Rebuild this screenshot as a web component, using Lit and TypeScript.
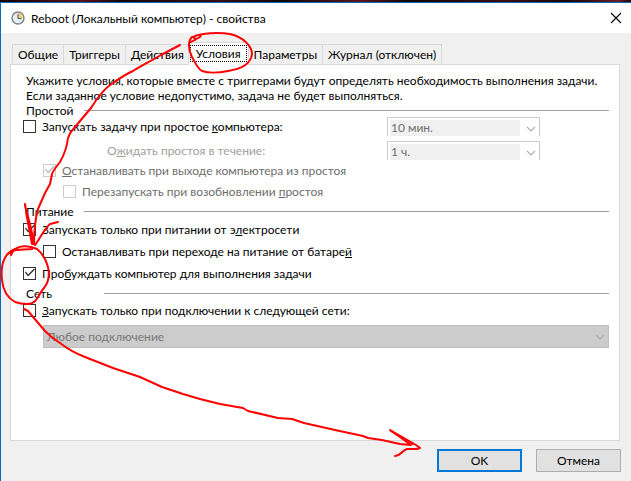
import { LitElement, html, css, svg } from "lit";
import { customElement } from "lit/decorators.js";

const chevron = html`<svg class="chevron" width="10" height="6" viewBox="0 0 10 6" aria-hidden="true">
  <path d="M1 .8 5 4.8 9 .8" fill="none" stroke="currentColor" stroke-width="1.2" />
</svg>`;

const strokes = [
  // curve from the tabs down to the power section
  "M180 45L161 55C151 61 141 66 133 71C124 75 119 79 113 83C105 88 97 98 91 108L75 127C71 131 69 135 68 138C67 147 64 155 60 162C56 167 53 171 52 174L50 184L45 193L38 209C35 220 34 232 34 244",
  "M25 204L27 216L33 244M25 206L30 224L34 243M26 212L32 244",
  "M58 222L50 224C44 229 40 239 35 245",
  // loop round the active tab
  "M195 40L194 37C198 34 202 35 200 37L191 42M193 37C202 33 218 32 230 34C243 37 252 46 252 54C251 64 241 69 228 71C218 73 208 73 202 71C197 68 195 62 192 57C188 49 188 41 192 37",
  // loop round the wake option
  "M11 255L13 251C18 249 24 250 32 249M11 254C17 243 31 246 37 249C43 254 46 259 48 267C50 276 48 283 44 288C38 294 38 304 27 304C22 304 18 303 15 302C8 298 3 291 2 280C1 270 2 263 5 258C7 253 11 251 15 249",
  // arrow to OK
  "M24 309L28 311L45 331C50 336 55 340 60 343C69 350 77 354 85 357L113 368L140 377L162 387L183 394L200 399L220 404L243 408L248 411L278 418L292 419L304 423L335 430L363 436L368 438L382 440L400 444L411 445L404 440L390 430L416 445L420 448L417 449H407C401 451 401 456 395 456",
  "M391 431L403 438L413 444",
];

@customElement("app-root")
export class AppRoot extends LitElement {
  static styles = css`
    * { box-sizing: border-box; }
    :host {
      display: flex;
      flex-direction: column;
      position: relative;
      min-height: 100vh;
      overflow: hidden;
      background: #f0f0f0;
      color: #000;
      font: 12px/15px Lato, "Noto Sans", sans-serif;
    }
    .desktop {
      height: 2px;
      background: linear-gradient(90deg, #100406, #5a1018 13%, #14050a 19%, #380c12 35%, #12060a 45%, #5c141c 57%, #100406 65%, #3c0c12 80%, #170609 90%, #6a1c24 98%, #200609);
    }
    .dialog {
      flex: 1;
      display: flex;
      flex-direction: column;
      border-top: 1px solid #0a6cb8;
      border-left: 1px solid #0a6cb8;
    }
    .titlebar {
      display: flex;
      align-items: center;
      gap: 6px;
      height: 30px;
      padding: 0 8px 0 10px;
      background: #fff;
    }
    .title { flex: 1; margin: 0; font-size: 12px; font-weight: 400; }
    .close { display: flex; padding: 1px; border: 0; background: none; }
    .tabs { display: flex; align-items: flex-end; height: 31px; padding-left: 11px; }
    .tab {
      height: 20px;
      padding: 0 5px;
      border: 1px solid #d9d9d9;
      border-bottom: 0;
      border-left-width: 0;
      background: #f0f0f0;
      color: #000;
      font: inherit;
      white-space: nowrap;
    }
    .tab:first-child { border-left-width: 1px; }
    .tab.active {
      height: 23px;
      margin: 0 0 -1px -2px;
      padding: 1px;
      border-left-width: 1px;
      background: #fff;
      z-index: 1;
    }
    .focus { display: block; padding: 0 5px; margin-bottom: 2px; border: 1px dotted #000; }
    .panel {
      flex: 1;
      margin: 0 11px 0 9px;
      padding: 8px 10px 8px 12px;
      border: 1px solid #d9d9d9;
      background: #fff;
    }
    .intro { margin: 0 0 0 3px; }
    .group { margin: 0 0 2px; padding: 0; border: 0; }
    .heading { display: flex; align-items: center; height: 14px; padding-left: 3px; }
    .name { width: 58px; }
    .name.wide { width: 78px; }
    .rule { flex: 1; height: 1px; background: #a0a0a0; }
    .row { display: flex; align-items: center; gap: 6px; height: 22px; }
    .row.short { height: 20px; }
    .in1 { padding-left: 20px; }
    .in2 { padding-left: 40px; }
    .off { color: #6d6d6d; }
    .off.faint { color: #a0a0a0; }
    .idle { display: grid; grid-template-columns: 364px 153px; grid-auto-rows: 19px; row-gap: 5px; align-items: center; }
    .idle .row { height: 19px; }
    .wait { padding-left: 84px; }
    input {
      appearance: none;
      flex: none;
      width: 13px;
      height: 13px;
      margin: 0;
      border: 1px solid #333;
      background: #fff;
    }
    input:disabled { border-color: #ccc; }
    input:checked::after {
      content: "";
      display: block;
      height: 11px;
      background: #333;
      clip-path: polygon(1px 5px, 2px 4px, 4px 7px, 10px 1px, 11px 2px, 4px 9px);
    }
    input:disabled:checked::after { background: #bbb; }
    .combo { position: relative; display: flex; color: #6d6d6d; }
    .chevron { position: absolute; right: 4px; top: 9px; color: #ababab; pointer-events: none; }
    select {
      appearance: none;
      width: 100%;
      height: 19px;
      margin: 0;
      border: 1px solid #ccc;
      border-bottom: 0;
      border-radius: 0;
      background: linear-gradient(#f0f0f0, #f0f0f0) 2px 2px / calc(100% - 21px) 100% no-repeat #fff;
      color: #6d6d6d;
      font: inherit;
      padding: 0 20px 0 3px;
      opacity: 1;
    }
    .network { margin: 5px 0 0 20px; }
    .network select { height: 23px; border: 1px solid #bfbfbf; background: #ccc; color: #787878; }
    .footer { display: flex; justify-content: flex-end; gap: 14px; padding: 8px 10px 9px; }
    .button {
      width: 85px;
      height: 23px;
      padding: 0;
      border: 1px solid #adadad;
      background: #e1e1e1;
      color: #000;
      font: inherit;
    }
    .button.primary { border: 2px solid #0078d7; }
    .ink { position: absolute; left: 0; top: 0; z-index: 2; pointer-events: none; }
  `;

  render() {
    return html`
      <div class="desktop"></div>
      <main class="dialog">
        <header class="titlebar">
          <svg width="14" height="14" viewBox="0 0 14 14" aria-hidden="true">
            <circle cx="7" cy="7" r="6" fill="#e3edf5" stroke="#848484" stroke-width="1.4" />
            <path d="M7 7V2A5 5 0 0 1 12 7Z" fill="#f3cf7e" />
            <path d="M7 3V7.5H10.5" fill="none" stroke="#555" />
          </svg>
          <h1 class="title">Reboot (Локальный компьютер) - свойства</h1>
          <button class="close" aria-label="Закрыть">
            <svg width="12" height="12" viewBox="0 0 12 12"><path d="M1 1 11 11M11 1 1 11" stroke="#000" stroke-width="1.1" /></svg>
          </button>
        </header>
        <nav class="tabs" role="tablist">
          <button class="tab" role="tab">Общие</button>
          <button class="tab" role="tab">Триггеры</button>
          <button class="tab" role="tab">Действия</button>
          <button class="tab active" role="tab" aria-selected="true"><span class="focus">Условия</span></button>
          <button class="tab" role="tab">Параметры</button>
          <button class="tab" role="tab">Журнал (отключен)</button>
        </nav>
        <section class="panel" role="tabpanel">
          <p class="intro">
            Укажите условия, которые вместе с триггерами будут определять необходимость выполнения задачи.<br />
            Если заданное условие недопустимо, задача не будет выполняться.
          </p>
          <section class="group">
            <div class="heading"><span class="name">Простой</span><span class="rule"></span></div>
            <div class="idle">
              <label class="row"><input type="checkbox" /><span>Запускать задачу при простое <u>к</u>омпьютера:</span></label>
              <div class="combo"><select disabled aria-label="Время простоя"><option>10 мин.</option></select>${chevron}</div>
              <label class="wait off faint" for="wait">О<u>ж</u>идать простоя в течение:</label>
              <div class="combo"><select id="wait" disabled><option>1 ч.</option></select>${chevron}</div>
            </div>
            <label class="row short in1 off"><input type="checkbox" checked disabled /><span><u>О</u>станавливать при выходе компьютера из простоя</span></label>
            <label class="row in2 off"><input type="checkbox" disabled /><span>Перезапускать при возобновлении <u>п</u>ростоя</span></label>
          </section>
          <section class="group">
            <div class="heading"><span class="name">Питание</span><span class="rule"></span></div>
            <label class="row"><input type="checkbox" checked /><span>Запускать только при питании от э<u>л</u>ектросети</span></label>
            <label class="row in1"><input type="checkbox" /><span>Останавливать при переходе на питание от батаре<u>й</u></span></label>
            <label class="row"><input type="checkbox" checked /><span>Про<u>б</u>уждать компьютер для выполнения задачи</span></label>
          </section>
          <section class="group">
            <div class="heading"><span class="name wide">Сеть</span><span class="rule"></span></div>
            <label class="row short"><input type="checkbox" /><span><u>З</u>апускать только при подключении к следующей сети:</span></label>
            <div class="combo network"><select disabled aria-label="Сеть"><option>Любое подключение</option></select>${chevron}</div>
          </section>
        </section>
        <footer class="footer">
          <button class="button primary">OK</button>
          <button class="button">Отмена</button>
        </footer>
      </main>
      <svg class="ink" width="631" height="481" viewBox="0 0 631 481" fill="none" stroke="#f00" stroke-width="2" stroke-linecap="round" stroke-linejoin="round" aria-hidden="true">
        ${strokes.map((d) => svg`<path d=${d} />`)}
      </svg>
    `;
  }
}
